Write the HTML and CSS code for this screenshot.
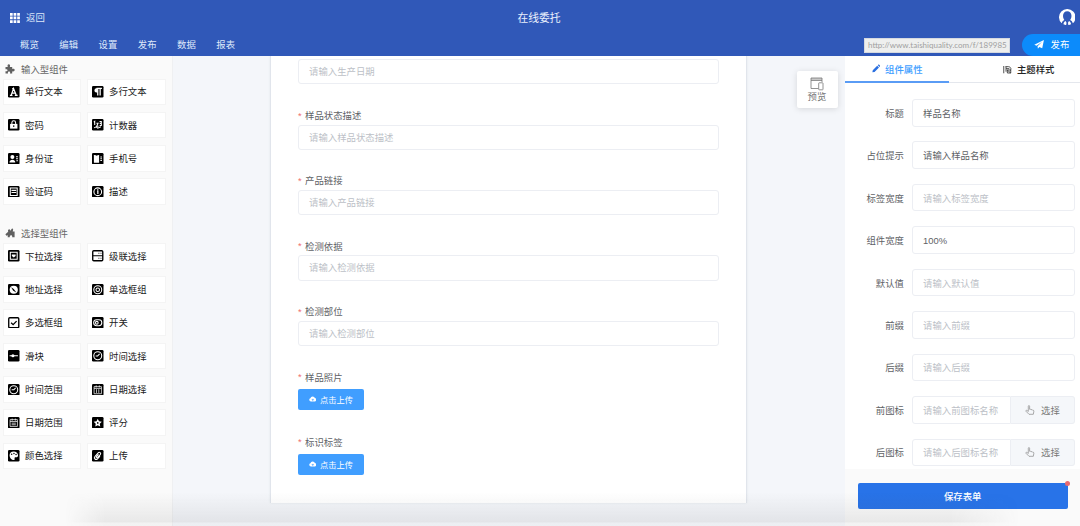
FILE: index.html
```html
<!DOCTYPE html>
<html lang="zh-CN">
<head>
<meta charset="utf-8">
<title>在线委托</title>
<link rel="stylesheet" href="styles.css">
</head>
<body>
<div class="app">
  <header class="header">
    <div class="header-top">
      <div class="back">
        <svg class="grid-icon" viewBox="0 0 10 10"><path d="M0 0h2.7v2.7H0zM3.6 0h2.7v2.7H3.6zM7.2 0h2.7v2.7H7.2zM0 3.6h2.7v2.7H0zM3.6 3.6h2.7v2.7H3.6zM7.2 3.6h2.7v2.7H7.2zM0 7.2h2.7v2.7H0zM3.6 7.2h2.7v2.7H3.6zM7.2 7.2h2.7v2.7H7.2z" fill="#fff"/></svg>
        <span>返回</span>
      </div>
      <div class="title">在线委托</div>
      <svg class="avatar" viewBox="0 0 16 16"><path d="M2.600 13.900A8 8 0 1 1 13.400 13.900C12.900 12 11.800 11.200 10.800 10.700 11.700 9.600 12.100 8.200 12.100 6.600 12.100 3.900 10.400 2.200 8 2.200S3.900 3.900 3.900 6.600C3.900 8.200 4.300 9.600 5.200 10.700 4.200 11.200 3.100 12 2.600 13.900z" fill="#fff"/><path d="M4.300 14.900C4.500 13.100 5.200 12.300 6.300 11.700L7.300 13.400 6.900 15.700zM11.700 14.900C11.500 13.100 10.800 12.300 9.700 11.700L8.700 13.400 9.100 15.700z" fill="#fff"/></svg>
    </div>
    <div class="header-nav">
      <nav class="nav"><span>概览</span><span>编辑</span><span>设置</span><span>发布</span><span>数据</span><span>报表</span></nav>
      <div class="url">http://www.taishiquality.com/f/189985</div>
      <div class="publish"><svg viewBox="0 0 11 10"><path d="M10.700 0 8.800 9.200 5.500 7.800 4 9.800 3.600 7 9 1.800 2.600 6.300 0 5.200z" fill="#fff"/></svg><span>发布</span></div>
    </div>
  </header>
  <div class="body">
    <aside class="sidebar">
      <h3 class="group-title"><svg viewBox="0 0 10 10"><path d="M.5 3h2.300C2.200 1.500 2.700.3 3.800.3s1.700 1.200 1 2.700h2.400v2c1-.7 2.500-.3 2.500 1S8.200 7.800 7.200 7.200v2.300H5C5.500 8.200 4.800 7.600 4 7.600s-1.400.6-1 1.900H.5V7.200C2 7.600 2.500 7 2.500 6.200S1.800 5 .5 5.300z" fill="#606060"/></svg>输入型组件</h3>
      <div class="items">
        <div class="item"><svg viewBox="0 0 11 11"><rect width="11" height="11" rx="1.200"/><path d="M1.800 9h2.500M6.500 9h2.700M3 9l2.300-6.600L8 9M4 6.700h3M4 2.400h1.500" class="w bold"/></svg>单行文本</div>
        <div class="item"><svg viewBox="0 0 11 11"><rect width="11" height="11" rx="1.200"/><path d="M5.500 2.200H4.300a2 2 0 0 0 0 4h1.200z" fill="#fff"/><path d="M4.300 2.300H9.500M5.500 2.300V9.200M7.800 2.300v6.900" class="w bold"/></svg>多行文本</div>
        <div class="item"><svg viewBox="0 0 11 11"><rect width="11" height="11" rx="1.200"/><path d="M2 4.700h7v4.500H2z" fill="#fff"/><path d="M3.700 5V3.500a1.800 1.800 0 0 1 3.600 0V5" class="w"/><path d="M5.500 6v1.700" class="k"/></svg>密码</div>
        <div class="item"><svg viewBox="0 0 11 11"><rect width="11" height="11" rx="1.200"/><path d="M1.700 3 2.600 2.300v3.500M4.200 4h1.600L4.500 7H6.300M7.200 2.300h1.700v4H7.300M7.400 4.200h1.500M2 8.500l2-1 1.500 1.300 3-1.400" class="w"/></svg>计数器</div>
        <div class="item"><svg viewBox="0 0 11 11"><rect width="11" height="11" rx="1.200"/><circle cx="4.200" cy="3.800" r="1.900" fill="#fff"/><path d="M1.400 9.200C1.400 5.600 7 5.600 7 9.200z" fill="#fff"/><path d="M7.700 3.500h1.800M7.700 5.500h1.800M8 7.500h1.500" class="w"/></svg>身份证</div>
        <div class="item"><svg viewBox="0 0 11 11"><rect width="11" height="11" rx="1.200"/><rect x="1.800" y="2" width="5" height="7.400" rx=".5" fill="#fff"/><path d="M3.500 2h1.800" class="k"/><path d="M8 3.800h1.500M8 5.500h1.500M8 7.200h1.500" class="w"/></svg>手机号</div>
        <div class="item"><svg viewBox="0 0 11 11"><rect width="11" height="11" rx="1.200"/><path d="M2.200 2h6.600v7H2.200zM3.300 4.200h4.500M3.300 6.300h4.500" class="w"/></svg>验证码</div>
        <div class="item"><svg viewBox="0 0 11 11"><rect width="11" height="11" rx="1.200"/><circle cx="5.500" cy="5.500" r="3.700" class="w"/><path d="M5.500 3v1M4.900 5h.7v2.600" class="w bold"/></svg>描述</div>
      </div>
      <h3 class="group-title second"><svg viewBox="0 0 10 10"><path d="M.4 6.200 3.200 3.800C2.600 2.300 3.500 1 4.600 1.300L5.300 2.800 7.200.3l1 1.300-.5 1.900h1.900v5.700H7.200c.2-1.400-.3-2-1.200-2s-1.300.7-1.200 2H2.700l.1-2-1.400.5z" fill="#606060"/></svg>选择型组件</h3>
      <div class="items">
        <div class="item"><svg viewBox="0 0 11 11"><rect width="11" height="11" rx="1.200"/><path d="M2.200 2.200h6.600v6.600H2.200z" class="w"/><path d="M3.700 4.200h3.600v1.500L5.500 7.200 3.700 5.700z" fill="#fff"/></svg>下拉选择</div>
        <div class="item"><svg viewBox="0 0 11 11"><rect x=".7" y=".7" width="9.600" height="9.600" rx="1" class="o"/><path d="M.7 5.500h9.600M6.200 3.100h.8M8.200 3.100H9M6.200 7.900h.8M8.200 7.900H9" class="k"/></svg>级联选择</div>
        <div class="item"><svg viewBox="0 0 11 11"><rect width="11" height="11" rx="1.200"/><circle cx="5.500" cy="5.500" r="3.900" fill="#fff"/><path d="m3 3.100 2.500 1.600L8 8.200 5 6.500z"/></svg>地址选择</div>
        <div class="item"><svg viewBox="0 0 11 11"><rect width="11" height="11" rx="1.200"/><circle cx="5.500" cy="5.500" r="3.800" class="w"/><circle cx="5.500" cy="5.500" r="1.700" class="w"/></svg>单选框组</div>
        <div class="item"><svg viewBox="0 0 11 11"><rect x=".7" y=".7" width="9.600" height="9.600" rx="1" class="o"/><path d="m3 5.500 1.900 1.800L8.200 3.900" class="k thick"/></svg>多选框组</div>
        <div class="item"><svg viewBox="0 0 11 11"><rect width="11" height="11" rx="1.200"/><rect x="1.600" y="2.700" width="7.800" height="5.600" rx="2.800" class="w"/><circle cx="4.600" cy="5.500" r="1.300" class="w"/></svg>开关</div>
        <div class="item"><svg viewBox="0 0 11 11"><rect width="11" height="11" rx="1.200"/><path d="M1.500 5.500h8" class="w"/><circle cx="4.700" cy="5.500" r="1.500" fill="#fff"/></svg>滑块</div>
        <div class="item"><svg viewBox="0 0 11 11"><rect width="11" height="11" rx="1.200"/><circle cx="5.500" cy="5.500" r="3.800" class="w"/><path d="M5.200 5.800H3.500M5.200 5.800 7.300 3.800" class="w"/></svg>时间选择</div>
        <div class="item"><svg viewBox="0 0 11 11"><rect width="11" height="11" rx="1.200"/><circle cx="5.500" cy="5.500" r="3.800" class="w"/><path d="M3.500 5.500h2.100L7.300 3.800" class="w"/></svg>时间范围</div>
        <div class="item"><svg viewBox="0 0 11 11"><rect width="11" height="11" rx="1.200"/><path d="M2 2.500h7v6.800H2zM2 4.200h7M4 1.300v2M7 1.300v2M4.300 5v3.500M6.500 5v3.500" class="w thin"/></svg>日期选择</div>
        <div class="item"><svg viewBox="0 0 11 11"><rect width="11" height="11" rx="1.200"/><path d="M2 2.500h7v6.500H2zM2 4.300h7M4 1.500v2M7 1.500v2M3.500 5.900h4M3.500 7.400h4" class="w thin"/></svg>日期范围</div>
        <div class="item"><svg viewBox="0 0 11 11"><rect width="11" height="11" rx="1.200"/><path d="m5.500 1.600 1.200 2.500 2.700.4-2 1.900.5 2.800-2.400-1.300-2.400 1.300.5-2.800-2-1.900 2.700-.4z" fill="#fff"/><circle cx="5.500" cy="5.700" r=".8"/></svg>评分</div>
        <div class="item"><svg viewBox="0 0 11 11"><rect width="11" height="11" rx="1.200"/><path d="M5.500 1.500C3 1.500 1.500 3.200 1.500 5c0 2.500 2 4.600 4 4.600.8 0 1-.6.8-1.300-.2-.9.3-1.300 1.200-1.300C9 7 9.700 6.300 9.600 5 9.500 3 7.700 1.500 5.500 1.500z" fill="#fff"/><circle cx="3.500" cy="4" r=".7"/><circle cx="5.700" cy="3.300" r=".7"/><circle cx="7.700" cy="4.400" r=".7"/></svg>颜色选择</div>
        <div class="item"><svg viewBox="0 0 11 11"><rect width="11" height="11" rx="1.200"/><path d="M7.600 5.800 5.300 8.400c-1.700 1.700-4-.4-2.500-2.200l3.100-3.500c1.300-1.300 3.200.2 2 1.700L5.200 7.300c-.8.700-1.600-.2-1-1l2-2.200" class="w"/></svg>上传</div>
      </div>
    </aside>
    <main class="canvas">
      <div class="paper">
        <div class="field clipped"><div class="input">请输入生产日期</div></div>
        <div class="field"><label><i>*</i>样品状态描述</label><div class="input">请输入样品状态描述</div></div>
        <div class="field"><label><i>*</i>产品链接</label><div class="input">请输入产品链接</div></div>
        <div class="field"><label><i>*</i>检测依据</label><div class="input">请输入检测依据</div></div>
        <div class="field"><label><i>*</i>检测部位</label><div class="input">请输入检测部位</div></div>
        <div class="field"><label><i>*</i>样品照片</label><div class="upload"><svg viewBox="0 0 8 6"><path d="M2 5.700A1.800 1.800 0 0 1 1.500 2.200 2.500 2.500 0 0 1 6.300 2 1.900 1.900 0 0 1 6.200 5.700z" fill="#fff"/><path d="M4 5.200V3M3 3.900l1-1 1 1" class="up"/></svg>点击上传</div></div>
        <div class="field"><label><i>*</i>标识标签</label><div class="upload"><svg viewBox="0 0 8 6"><path d="M2 5.700A1.800 1.800 0 0 1 1.500 2.200 2.500 2.500 0 0 1 6.300 2 1.900 1.900 0 0 1 6.200 5.700z" fill="#fff"/><path d="M4 5.200V3M3 3.900l1-1 1 1" class="up"/></svg>点击上传</div></div>
      </div>
      <div class="preview"><svg viewBox="0 0 14 14"><path d="M8.500 11.500H1V1h11v4M1 3.500h11M1 2h11" /><rect x="8.700" y="5.800" width="4.300" height="7" rx=".5"/></svg><span>预览</span></div>
    </main>
    <aside class="props">
      <div class="tabs">
        <div class="tab active"><svg viewBox="0 0 9 9"><path d="M.4 8.600.8 6.300 5.500 1.600l1.900 1.900-4.700 4.700zM6.100 1l.7-.7c.4-.4 2.300 1.500 1.900 1.900l-.7.7z" fill="#2a6fe0"/></svg>组件属性</div>
        <div class="tab"><svg viewBox="0 0 9 9"><path d="M.8.800v7.700M2.500 1.500h3.300c3 .3 3.200 3.300 1.500 4.200M3.200 1.600v5.200M3.200 3.600h3.500M4.600 5.200l3.600 3M4.600 8.200V5h3.600v3.200z" fill="none" stroke="#333" stroke-width=".9"/></svg>主题样式</div>
      </div>
      <div class="prop-list">
        <div class="prop"><label>标题</label><div class="input value">样品名称</div></div>
        <div class="prop"><label>占位提示</label><div class="input value">请输入样品名称</div></div>
        <div class="prop"><label>标签宽度</label><div class="input">请输入标签宽度</div></div>
        <div class="prop"><label>组件宽度</label><div class="input value">100%</div></div>
        <div class="prop"><label>默认值</label><div class="input">请输入默认值</div></div>
        <div class="prop"><label>前缀</label><div class="input">请输入前缀</div></div>
        <div class="prop"><label>后缀</label><div class="input">请输入后缀</div></div>
        <div class="prop"><label>前图标</label><div class="input joined">请输入前图标名称</div><div class="append"><svg viewBox="0 0 10 10"><path d="M3.300 6.500V1.300c0-1 1.300-1 1.300 0v3c1-.3 1.400 0 1.500.4.900-.3 1.300 0 1.500.5.800-.1 1.300.2 1.300.9L8.300 9.300H4L1 6.300c-.4-1 .6-1.300 1.200-.7z"/></svg>选择</div></div>
        <div class="prop"><label>后图标</label><div class="input joined">请输入后图标名称</div><div class="append"><svg viewBox="0 0 10 10"><path d="M3.300 6.500V1.300c0-1 1.300-1 1.300 0v3c1-.3 1.400 0 1.500.4.900-.3 1.300 0 1.500.5.800-.1 1.300.2 1.300.9L8.300 9.300H4L1 6.300c-.4-1 .6-1.300 1.200-.7z"/></svg>选择</div></div>
      </div>
      <div class="save-bar"><div class="save">保存表单<b class="dot"></b></div></div>
    </aside>
  </div>
  <div class="shade"></div>
</div>
</body>
</html>
```
FILE: styles.css
```css
* { box-sizing: border-box; }
body { margin: 0; font-family: "Liberation Sans", "Noto Sans CJK SC", sans-serif; font-size: 9.4px; color: #606266; }
svg { display: block; flex: none; }
.app { position: relative; width: 1080px; height: 526px; overflow: hidden; display: flex; flex-direction: column; background: #f4f6fa; }

.header { height: 56px; flex: none; background: #3058b8; color: #dfe8fa; }
.header-top { height: 34px; display: grid; grid-template-columns: 1fr auto 1fr; align-items: center; padding: 0 5px 0 10px; }
.back { display: flex; align-items: center; gap: 6px; padding-bottom: 1px; }
.grid-icon { width: 10px; height: 10px; margin-top: 3px; }
.title { font-size: 10.8px; margin-right: 7px; color: #e8effc; }
.avatar { width: 16.500px; height: 16.500px; justify-self: end; }
.header-nav { height: 22px; display: flex; align-items: center; }
.nav { display: flex; gap: 20.500px; padding: 0 0 2px 20px; flex: 1; }
.url { width: 146px; height: 15px; margin-right: 12px; padding-left: 3px; line-height: 12px; background: #eeefee; border: 1px solid #d5d9e0; color: #a0a0a0; font-family: Lato, sans-serif; font-size: 8px; white-space: nowrap; }
.publish { width: 58px; height: 22px; display: flex; align-items: center; gap: 6px; padding: 0 0 2px 12px; background: #0c8bfb; border-radius: 11px 0 0 11px; color: #fff; }
.publish svg { width: 10.500px; height: 9px; }

.body { flex: 1; min-height: 0; display: flex; }
.sidebar { width: 172.500px; flex: none; background: #fafafa; border-right: 1px solid #eff0f2; }
.group-title { margin: 0; height: 22.500px; padding: 3px 0 0 5px; display: flex; align-items: center; gap: 6px; font-weight: 400; font-size: 9.4px; color: #666; }
.group-title svg { width: 10px; height: 10px; }
.group-title.second { height: 22px; margin-top: 16px; padding-top: 2px; }
.items { display: grid; grid-template-columns: 78px 78px; column-gap: 6px; row-gap: 6.800px; padding-left: 3px; }
.item { height: 26.500px; display: flex; align-items: center; gap: 6px; padding: 0 0 1px 4px; background: #fff; border: 1px solid #f4f4f4; color: #222; white-space: nowrap; }
.item:nth-child(even) { width: 79px; }
.item svg { width: 11.500px; height: 11.500px; margin: 1px -.5px 0 0; }
.w { fill: none; stroke: #fff; stroke-width: 1; }
.bold { stroke-width: 1.200; }
.k { fill: none; stroke: #000; stroke-width: 1; }
.o { fill: #fff; stroke: #000; stroke-width: 1.3; }
.thick { stroke-width: 1.200; }
.thin { stroke-width: .7; }

.canvas { position: relative; flex: 1; padding-left: 98px; overflow: hidden; }
.paper { width: 477px; height: 447px; padding: 0 27px; margin-left: -.5px; background: #fff; border: solid #e1e5ec; border-width: 0 1px; box-shadow: 0 0 2px #e3e6ec; }
.field { height: 65.400px; }
.field.clipped { height: 51.500px; padding-top: 2.500px; }
.field label { display: flex; align-items: center; height: 17px; padding-bottom: 2px; }
.field i { width: 7px; font-style: normal; color: #f07070; }
.input { height: 25.300px; padding: 0 0 1px 10px; display: flex; align-items: center; background: #fff; border: 1px solid #eceef3; border-radius: 3px; color: #bcbfc7; white-space: nowrap; }
.upload { width: 65.500px; height: 21px; margin-top: 2.500px; padding-bottom: 1px; display: flex; align-items: center; justify-content: center; gap: 4px; background: #409eff; border-radius: 2px; color: #fff; font-size: 8.2px; }
.upload svg { width: 7.500px; height: 6px; margin-top: 1px; }
.up { fill: none; stroke: #409eff; stroke-width: .7; }
.preview { position: absolute; left: 624px; top: 15px; width: 41px; height: 37px; padding-top: 6px; display: flex; flex-direction: column; align-items: center; background: #fff; border-radius: 2px; box-shadow: 0 1px 6px rgba(0,0,0,.13); line-height: 12px; color: #777; }
.preview svg { width: 14px; height: 14px; fill: #fff; stroke: #777; stroke-width: .8; }

.props { width: 235.500px; flex: none; display: flex; flex-direction: column; background: #fff; }
.tabs { height: 27px; flex: none; display: flex; justify-content: space-between; border-bottom: 1px solid #e4e7ed; color: #222; font-weight: 500; }
.tab { display: flex; align-items: center; gap: 5px; padding: 0 25.500px 0 0; }
.tab svg { width: 8.500px; height: 9px; }
.tab.active { width: 104px; padding: 0 0 0 27px; color: #409eff; height: 27px; border-bottom: 2px solid #5a9cf5; }
.prop-list { flex: 1; overflow: hidden; padding: 16px 5px 0 0; }
.prop { height: 27.500px; margin-bottom: 14.950px; display: flex; align-items: center; }
.prop label { width: 67.500px; padding-right: 8px; text-align: right; flex: none; }
.prop .input { height: 27.500px; flex: 1; padding-bottom: 0; }
.input.value { color: #606266; }
.prop .joined { border-radius: 3px 0 0 3px; }
.append { width: 64px; height: 27.500px; display: flex; align-items: center; gap: 6px; padding-left: 14px; background: #f5f7fa; border: 1px solid #eceef3; border-left: 0; border-radius: 0 3px 3px 0; color: #777; }
.append svg { width: 10px; height: 10px; fill: none; stroke: #888; stroke-width: .7; }
.save-bar { height: 57px; flex: none; padding: 14px 12px 0 13px; background: #fafafa; }
.save { position: relative; height: 26px; display: flex; align-items: center; justify-content: center; background: #2873e8; border-radius: 2px; color: #fff; font-weight: 500; }
.dot { position: absolute; right: -2px; top: -2px; width: 5px; height: 5px; border-radius: 50%; background: #e86a70; }
.shade { position: absolute; left: 0; right: 0; bottom: 0; height: 34px; background: linear-gradient(rgba(60,60,60,0), rgba(60,60,60,.09) 30px, rgba(60,60,60,.04) 31px); mask-image: linear-gradient(90deg, transparent 65px, #000 105px, #000 950px, transparent 1020px); pointer-events: none; }
```
